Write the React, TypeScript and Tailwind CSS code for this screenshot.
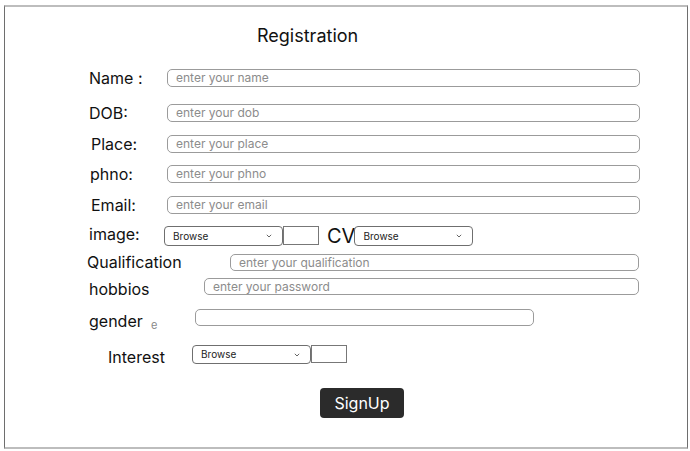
import { ReactNode } from 'react'

const font = { fontFamily: 'Inter, "Noto Sans", sans-serif' }

function TextBox({ width, placeholder }: { width: string; placeholder?: string }) {
  return (
    <div
      className={`${width} h-full border border-[#9b9b9b] rounded-[5px] flex items-center pl-[8px] text-[12px] text-[#8c8c8c] bg-white`}
    >
      {placeholder}
    </div>
  )
}

function Browse() {
  return (
    <div className="flex items-center h-full">
      <div className="w-[119px] h-full border border-[#6f6f6f] rounded-[4px] flex items-center justify-between pl-[8px] pr-[10px] text-[10px] text-[#222]">
        <span>Browse</span>
        <svg width="6" height="4" viewBox="0 0 6 4" fill="none">
          <path d="M0.8 0.8 L3 3 L5.2 0.8" stroke="#555" strokeWidth="0.9" />
        </svg>
      </div>
    </div>
  )
}

function Row({ className, children }: { className: string; children: ReactNode }) {
  return <div className={`flex items-center ${className}`}>{children}</div>
}

export default function App() {
  return (
    <div className="w-[690px] h-[451px] bg-white pt-[5px] pl-[4px]" style={font}>
      <div className="w-[684px] h-[444px] border-x border-x-[#6e6e6e] border-y-2 border-y-[#bdbdbd] text-[#111]">
        <div className="mt-[17px] h-[24px] pl-[252px] text-[18px] leading-[24px]">Registration</div>

        <Row className="mt-[21px] h-[18px]">
          <span className="ml-[84px] w-[78px] text-[16px]">Name :</span>
          <TextBox width="w-[473px]" placeholder="enter your name" />
        </Row>

        <Row className="mt-[17px] h-[18px]">
          <span className="ml-[84px] w-[78px] text-[16px]">DOB:</span>
          <TextBox width="w-[473px]" placeholder="enter your dob" />
        </Row>

        <Row className="mt-[13px] h-[18px]">
          <span className="ml-[86px] w-[76px] text-[16px]">Place:</span>
          <TextBox width="w-[473px]" placeholder="enter your place" />
        </Row>

        <Row className="mt-[12px] h-[18px]">
          <span className="ml-[85px] w-[77px] text-[16px]">phno:</span>
          <TextBox width="w-[473px]" placeholder="enter your phno" />
        </Row>

        <Row className="mt-[13px] h-[18px]">
          <span className="ml-[86px] w-[76px] text-[16px]">Email:</span>
          <TextBox width="w-[473px]" placeholder="enter your email" />
        </Row>

        <Row className="mt-[12px] h-[20px]">
          <span className="ml-[84px] w-[75px] text-[16px] relative top-[-2px]">image:</span>
          <Browse />
          <div className="w-[36px] h-[19px] border border-[#777] self-start" />
          <span className="ml-[8px] mr-[-1px] text-[20px] leading-[20px]">CV</span>
          <Browse />
        </Row>

        <Row className="mt-[8px] h-[17px]">
          <span className="ml-[82px] w-[143px] text-[16px] relative top-[-1px]">Qualification</span>
          <TextBox width="w-[409px]" placeholder="enter your qualification" />
        </Row>

        <Row className="mt-[7px] h-[17px]">
          <span className="ml-[84px] w-[115px] text-[16px] relative top-[2px]">hobbios</span>
          <TextBox width="w-[435px]" placeholder="enter your password" />
        </Row>

        <Row className="mt-[14px] h-[17px]">
          <span className="ml-[84px] w-[62px] text-[16px] relative top-[3px]">gender</span>
          <span className="w-[44px] text-[11px] text-[#888] relative top-[8px]">e</span>
          <TextBox width="w-[339px]" />
        </Row>

        <Row className="mt-[19px] h-[19px]">
          <span className="ml-[103px] w-[84px] text-[16px] relative top-[2px]">Interest</span>
          <Browse />
          <div className="w-[36px] h-[18px] border border-[#777] self-start" />
        </Row>

        <div className="mt-[24px] pl-[315px]">
          <button className="w-[84px] h-[30px] bg-[#2b2b2b] rounded-[4px] text-white text-[16px]">SignUp</button>
        </div>
      </div>
    </div>
  )
}
